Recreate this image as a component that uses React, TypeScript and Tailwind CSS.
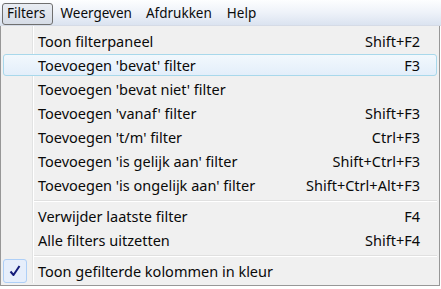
import React from "react";

type Item = { label: string; shortcut?: string; active?: boolean; checked?: boolean } | "sep";

const items: Item[] = [
  { label: "Toon filterpaneel", shortcut: "Shift+F2" },
  { label: "Toevoegen 'bevat' filter", shortcut: "F3", active: true },
  { label: "Toevoegen 'bevat niet' filter" },
  { label: "Toevoegen 'vanaf' filter", shortcut: "Shift+F3" },
  { label: "Toevoegen 't/m' filter", shortcut: "Ctrl+F3" },
  { label: "Toevoegen 'is gelijk aan' filter", shortcut: "Shift+Ctrl+F3" },
  { label: "Toevoegen 'is ongelijk aan' filter", shortcut: "Shift+Ctrl+Alt+F3" },
  "sep",
  { label: "Verwijder laatste filter", shortcut: "F4" },
  { label: "Alle filters uitzetten", shortcut: "Shift+F4" },
  "sep",
  { label: "Toon gefilterde kolommen in kleur", checked: true },
];

function MenuRow({ item }: { item: Exclude<Item, "sep"> }) {
  return (
    <div className="relative flex h-[24px] items-center">
      {item.active && (
        <div className="absolute inset-x-[2px] inset-y-[1px] rounded-[3px] border border-[#a8d8eb] bg-gradient-to-b from-[#f2f8fd] to-[#e3eefa]" />
      )}
      <div className="relative flex w-[32px] shrink-0 items-center justify-start pl-[2px]">
        {item.checked && (
          <div className="flex h-[24px] w-[24px] items-center justify-center rounded-[3px] border border-[#aecff7] bg-[#e6eefb]">
            <svg width="14" height="14" viewBox="0 0 14 14" aria-hidden>
              <path d="M2.5 7.5 L5.5 11 L11.5 2" fill="none" stroke="#141c7a" strokeWidth="2" strokeLinejoin="round" />
            </svg>
          </div>
        )}
      </div>
      <span className="relative flex-1 pl-[5px] text-[#0a0a0a]">{item.label}</span>
      {item.shortcut && <span className="relative pr-[19px] text-[#0a0a0a]">{item.shortcut}</span>}
    </div>
  );
}

export default function App() {
  return (
    <div
      className="relative h-[289px] w-[441px] overflow-hidden bg-white text-[14.5px] leading-none"
      style={{ fontFamily: '"Segoe UI", "Noto Sans", "Open Sans", sans-serif' }}
    >
      {/* menu bar */}
      <div className="flex h-[26px] items-start border-b border-[#d5dbe6] bg-gradient-to-b from-[#fdfeff] via-[#eef2f9] to-[#dbe3f0] pl-[2px] pt-[3px] text-[13.5px] text-[#0a0a0a]">
        <div className="flex h-[22px] items-center rounded-[3px] border border-[#6f6f6f] bg-gradient-to-b from-[#e9edf3] to-[#d6dce6] pl-[4px] pr-[6px]">
          Filters
        </div>
        <div className="flex h-[22px] items-center pl-[8px] pr-[7px]">Weergeven</div>
        <div className="flex h-[22px] items-center px-[7px]">Afdrukken</div>
        <div className="flex h-[22px] items-center pl-[8px] pr-[7px]">Help</div>
      </div>

      {/* dropdown */}
      <div className="absolute left-0 top-[26px] w-[440px] border border-t-0 border-[#979797] bg-[#f0f0f0] pb-[2px] pt-[3px]">
        <div className="absolute bottom-[2px] left-[31px] top-0 w-[2px] border-l border-r border-l-[#e2e3e3] border-r-white" />
        {items.map((it, i) =>
          it === "sep" ? (
            <div key={i} className="relative flex h-[7px] items-center">
              <div className="ml-[33px] mr-[2px] h-[2px] flex-1 border-b border-t border-b-white border-t-[#e0e0e0]" />
            </div>
          ) : (
            <MenuRow key={i} item={it} />
          )
        )}
      </div>
    </div>
  );
}
